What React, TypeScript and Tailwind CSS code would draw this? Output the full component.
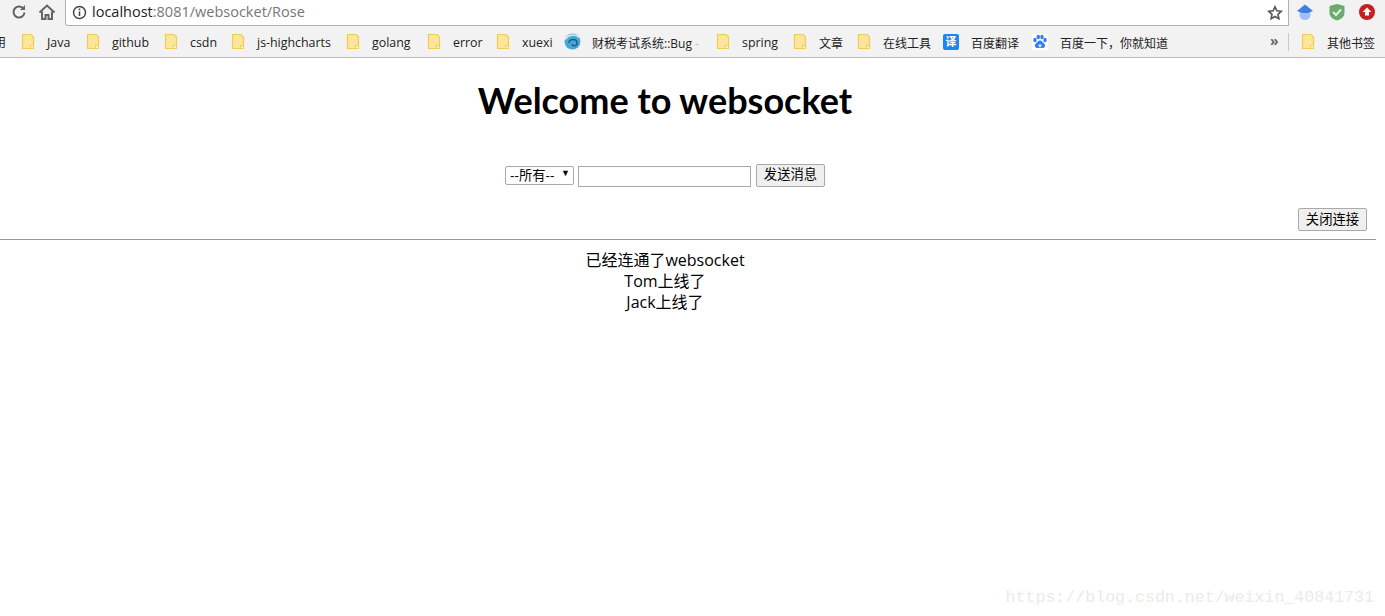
import React from "react";

const UI = "font-['Open_Sans','Noto_Sans_CJK_SC',sans-serif]";

function Folder() {
  return (
    <svg width="14" height="17" viewBox="0 0 14 17" className="shrink-0">
      <path d="M1.500 1.500h8.500l2.500 2.500v11.500h-11z" fill="#fde59a" stroke="#f2cb55" strokeWidth="1.200" />
      <rect x="9.500" y="12.500" width="3" height="3" fill="#fff3c4" stroke="#f2cb55" strokeWidth="0.800" />
    </svg>
  );
}

function Item({ label, w, latin, icon }: { label: string; w: string; latin?: boolean; icon?: React.ReactNode }) {
  return (
    <div className={`flex items-center shrink-0 gap-3 ${w}`}>
      {icon ?? <Folder />}
      <span className={`whitespace-nowrap relative top-[2px] ${latin ? "text-[12.400px]" : "text-[12px]"}`}>{label}</span>
    </div>
  );
}

function Globe() {
  return (
    <svg width="17" height="17" viewBox="0 0 17 17" className="shrink-0">
      <circle cx="8.500" cy="8.500" r="8" fill="#4aa6d6" />
      <path d="M1.500 6.500c2-5 10-6 13.500-2" stroke="#d4ecf5" strokeWidth="1.600" fill="none" />
      <path d="M5 10c0-4 7-5 8-1s-4 5-5 2" stroke="#1c5f8c" strokeWidth="1.500" fill="none" />
    </svg>
  );
}

function Baidu() {
  return (
    <svg width="16" height="16" viewBox="0 0 16 16" className="shrink-0">
      <rect width="16" height="16" fill="#fff" />
      <g fill="#2f7cf6">
        <ellipse cx="3" cy="6" rx="1.700" ry="2.200" />
        <ellipse cx="6.300" cy="3" rx="1.700" ry="2.200" />
        <ellipse cx="10" cy="3" rx="1.700" ry="2.200" />
        <ellipse cx="13" cy="6" rx="1.700" ry="2.200" />
        <path d="M8 6.500c2 0 2.500 2 4 3 2 1.500 1 5-2 4.500-1-.2-3-.2-4 0-3 .5-4-3-2-4.500 1.500-1 2-3 4-3z" />
        <circle cx="8" cy="11.500" r="1.600" fill="#cfe0fb" />
      </g>
    </svg>
  );
}

function Translate() {
  return (
    <div className="w-4 h-4 shrink-0 rounded-[2px] bg-[#1b86f2] text-white text-[11px] leading-4 text-center font-bold">译</div>
  );
}

function Extensions() {
  return (
    <div className="flex items-center h-[24px] pl-[7px]">
      <svg width="18" height="18" viewBox="0 0 18 18" className="mr-[14px]">
        <circle cx="9" cy="11.500" r="5.500" fill="#9cc0f7" />
        <path d="M1 8 9 1.500 17 8l-5 2H6z" fill="#3f7fe0" />
      </svg>
      <svg width="18" height="18" viewBox="0 0 18 18" className="mr-[12px]">
        <path d="M1.500 3 9 1l7.500 2v7c0 4-4 6.500-7.500 7.500C5.500 16.500 1.500 14 1.500 10z" fill="#6bab6f" />
        <path d="M5 9l3 3 5-5.500" stroke="#dff3df" strokeWidth="2" fill="none" />
      </svg>
      <svg width="18" height="18" viewBox="0 0 18 18">
        <circle cx="9" cy="9" r="8" fill="#c51f1f" />
        <path d="M9 4.500l4.500 4.500H11v3.500H7V9H4.500z" fill="#fff" />
      </svg>
    </div>
  );
}

export default function App() {
  return (
    <div className="min-h-[616px] bg-white relative overflow-hidden text-black">
      <div className={`bg-[#f2f2f2] h-[58px] border-b border-[#bdbdbd] ${UI}`}>
        <div className="flex h-[26px]">
          <div className="flex items-center gap-[10px] pl-[10px] w-[65px] shrink-0 pb-[2px]">
            <svg width="18" height="18" viewBox="0 0 18 18" fill="none" stroke="#606368" strokeWidth="2">
              <path d="M14.500 9.500a5.500 5.500 0 1 1-1.600-4.400" />
              <path d="M15 2v5h-5" fill="#606368" stroke="none" />
            </svg>
            <svg width="18" height="18" viewBox="0 0 18 18" fill="none" stroke="#606368" strokeWidth="2">
              <path d="M1.500 9.500 9 2.500l7.500 7" />
              <path d="M4 8.500V16h3.500v-4h3v4H14V8.500" />
            </svg>
          </div>
          <div className="flex-1 bg-white border-r border-b border-l border-[#b0b0b0] rounded-bl-[3px] flex items-center pl-[6px] pr-[5px] min-w-0">
            <svg width="15" height="15" viewBox="0 0 15 15" className="shrink-0" fill="none" stroke="#444">
              <circle cx="7.500" cy="7.500" r="6" strokeWidth="1.500" />
              <path d="M7.500 6.500v4.500M7.500 3.500v1.800" strokeWidth="1.600" />
            </svg>
            <div className="ml-[5px] text-[14.500px] leading-none flex-1 whitespace-nowrap text-[#777]">
              <span className="text-[#222]">localhost</span>:8081/websocket/Rose
            </div>
            <svg width="16" height="16" viewBox="0 0 16 16" fill="none" stroke="#555" strokeWidth="1.600">
              <path d="M8 1.800l1.900 4 4.300.5-3.200 3 .9 4.400L8 11.500l-3.900 2.200.9-4.400-3.200-3 4.300-.5z" />
            </svg>
          </div>
          <div className="w-[96px] shrink-0"><Extensions /></div>
        </div>
        <div className="flex items-center h-[31px] text-[12px] text-[#222] relative pl-[21px]">
          <span className="absolute left-[-6px] top-[11px] leading-none">用</span>
          <Item latin label="Java" w="w-[65px]" />
          <Item latin label="github" w="w-[78px]" />
          <Item latin label="csdn" w="w-[67px]" />
          <Item latin label="js-highcharts" w="w-[115px]" />
          <Item latin label="golang" w="w-[81px]" />
          <Item latin label="error" w="w-[69px]" />
          <Item latin label="xuexi" w="w-[68px]" />
          <div className="flex items-center shrink-0 gap-[11px] w-[152px]">
            <Globe />
            <span className="whitespace-nowrap relative top-[2px]">财税考试系统::Bug<span className="text-[#bbb]"> -</span></span>
          </div>
          <Item latin label="spring" w="w-[77px]" />
          <Item label="文章" w="w-[64px]" />
          <Item label="在线工具" w="w-[86px]" />
          <Item label="百度翻译" w="w-[89px]" icon={<Translate />} />
          <Item label="百度一下，你就知道" w="w-[238px]" icon={<Baidu />} />
          <span className="w-[18px] shrink-0 text-[#666] text-[14px] leading-none font-bold pb-[1px]">»</span>
          <div className="w-px h-[18px] bg-[#c8c8c8] shrink-0 mr-[12px]" />
          <Item label="其他书签" w="w-[84px]" />
        </div>
      </div>

      <main className="font-['Open_Sans','Noto_Sans_CJK_SC',sans-serif]">
        <div className="w-[1330px] text-center">
          <h1 className="text-[36px] leading-[48px] font-bold pt-[18px] font-['Lato',sans-serif]">Welcome to websocket</h1>
          <div className="flex justify-center items-center mt-[40px] h-[24px] text-[13.330px] font-['Liberation_Sans','Noto_Sans_CJK_SC',sans-serif]">
            <div className="relative mr-[4px] mt-[-1px] flex">
              <select className="appearance-none w-[69px] h-[19px] border border-[#a9a9a9] rounded-[2px] bg-white pl-[4px] text-[13.330px] leading-none outline-none">
                <option>--所有--</option>
              </select>
              <span className="absolute right-[4px] top-[1px] text-[9px] leading-[12px] pointer-events-none">▼</span>
            </div>
            <input className="w-[173px] h-[21px] border border-[#a9a9a9] mr-[5px] outline-none" />
            <button className="w-[69px] h-[23px] mt-[-2px] border border-[#a9a9a9] rounded-[2px] bg-[#efefef] text-[13.330px] leading-none">发送消息</button>
          </div>
        </div>
        <div className="w-[1367px] flex justify-end mt-[20px]">
          <button className="w-[69px] h-[23px] border border-[#a9a9a9] rounded-[2px] bg-[#efefef] text-[13.330px] leading-none font-['Liberation_Sans','Noto_Sans_CJK_SC',sans-serif]">关闭连接</button>
        </div>
        <hr className="w-[1376px] border-t border-[#999] mt-[8px]" />
        <div className="w-[1330px] text-center text-[16px] leading-[21px] mt-[10px]">
          <div>已经连通了websocket</div>
          <div>Tom上线了</div>
          <div>Jack上线了</div>
        </div>
      </main>

      <div className="absolute right-[11px] bottom-[9px] text-[16.600px] leading-none text-[#ebebe7] font-['Liberation_Mono',monospace] whitespace-nowrap">
        https://blog.csdn.net/weixin_40841731
      </div>
    </div>
  );
}
